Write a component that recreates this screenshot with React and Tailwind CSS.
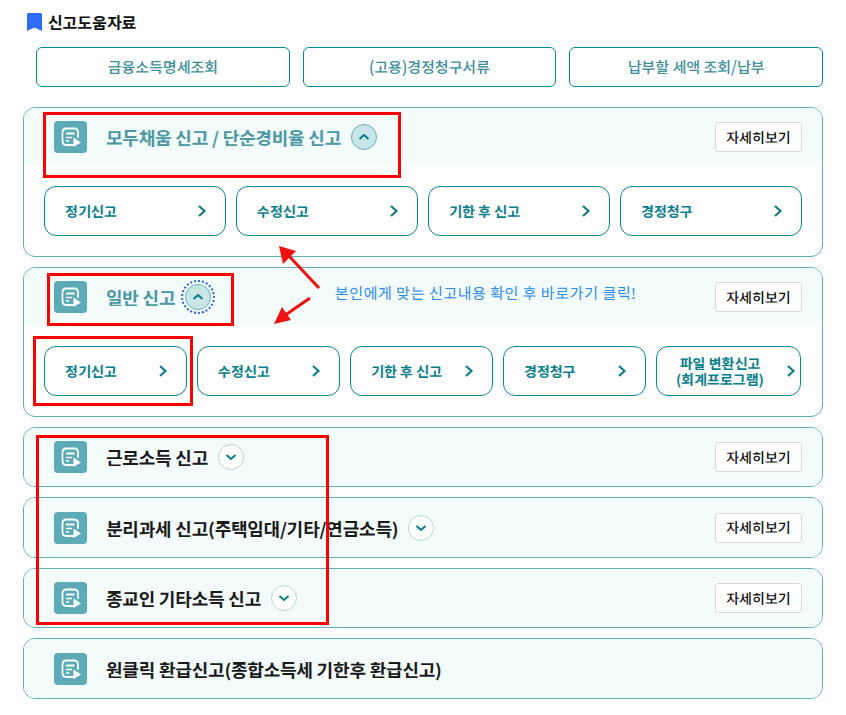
import React from "react";

const FONT = "font-['Noto_Sans_KR','Noto_Sans_CJK_KR',sans-serif]";

const FileIcon = () => (
  <div className="w-[33px] h-[32px] shrink-0 rounded-[4px] bg-[#5dabb6] flex items-center justify-center">
    <svg width="33" height="32" viewBox="0 0 33 32" fill="none">
      <path d="M20 24H12.5C10 24 8.5 22.5 8.5 20V11.5C8.5 9 10 7.5 12.5 7.5H20C22.5 7.5 24 9 24 11.5V16" stroke="white" strokeWidth="1.8" strokeLinecap="round" />
      <path d="M12 12.5H20.5" stroke="white" strokeWidth="1.8" />
      <path d="M12 16.5H18M12 20H15" stroke="white" strokeWidth="1.6" />
      <path d="M19.5 16.5L27 21.5L19.5 26Z" fill="white" />
    </svg>
  </div>
);

const Toggle = ({ open, focus }) => (
  <span className={`relative w-[26px] h-[26px] shrink-0 rounded-full border flex items-center justify-center ${open ? "bg-[#c9e5e6] border-[#6fb0b8]" : "bg-white border-[#b5d6da]"}`}>
    {focus && <span className="absolute -inset-[5px] rounded-full border-[2px] border-dotted border-[#2b63e0]" />}
    <svg width="12" height="8" viewBox="0 0 12 8" fill="none">
      <path d={open ? "M1.5 6L6 2L10.5 6" : "M1.5 2L6 6L10.5 2"} stroke="#00808c" strokeWidth="2" />
    </svg>
  </span>
);

const DetailButton = () => (
  <button className="w-[87px] h-[30px] shrink-0 rounded-[3px] border border-[#d8d8d8] bg-white text-[14px] font-medium text-[#111]">
    자세히보기
  </button>
);

const Header = ({ title, open, focus, detail, gap = "gap-[10px]", h = "h-[58px]" }) => (
  <div className={`flex items-center justify-between ${h} pl-[30px] pr-[20px] bg-[#f3fbfb]`}>
    <div className="flex items-center">
      <FileIcon />
      <span className={`ml-[19px] text-[18px] font-bold leading-none tracking-[-0.2px] ${open ? "text-[#4a98a3]" : "text-[#1a1a1a]"}`}>{title}</span>
      {open !== undefined && (
        <span className={`flex ${gap}`}>
          <span className="w-0" />
          <Toggle open={open} focus={focus} />
        </span>
      )}
    </div>
    {detail && <DetailButton />}
  </div>
);

const LinkButton = ({ label, second, wide }) => (
  <button className={`flex items-center justify-between h-[50px] rounded-[12px] border border-[#008a99] bg-white ${wide ? "w-[182px] pl-[20px] pr-[18px]" : "flex-1 pl-[20px] pr-[18px]"} ${second ? "!pl-[20px] !pr-[20px]" : ""} text-[14px] font-bold text-[#0b7f8d]`}>
    {second ? (
      <span className="text-center leading-[16px] -ml-[1px]">{label}<br />{second}</span>
    ) : (
      <span>{label}</span>
    )}
    <svg className={second ? "-mr-[16px] shrink-0" : "shrink-0"} width="10" height="14" viewBox="0 0 10 14" fill="none">
      <path d="M2 2L7.5 7L2 12" stroke="#0b7f8d" strokeWidth="2.2" />
    </svg>
  </button>
);

const Card = ({ children }) => (
  <div className="rounded-[12px] border border-[#62aeb8] overflow-hidden bg-white">{children}</div>
);

const Arrow = ({ d, points }) => (
  <g>
    <path d={d} stroke="#f01010" strokeWidth="3" />
    <polygon points={points} fill="#f01010" />
  </g>
);

export default function App() {
  return (
    <div className={`relative w-[846px] h-[715px] bg-white overflow-hidden ${FONT}`}>
      <div className="flex flex-col px-[23px] pt-[11px]">
        <div className="flex items-center h-[22px] pl-[4px] gap-[6px]">
          <svg width="15" height="18" viewBox="0 0 15 18"><path d="M1.5 0H13.5C14.3 0 15 .7 15 1.5V18L7.5 14.5L0 18V1.5C0 .7.7 0 1.5 0Z" fill="#2b6cf0" /></svg>
          <h2 className="text-[16px] font-bold text-[#111] leading-none">신고도움자료</h2>
        </div>

        <div className="flex gap-[13px] pl-[13px] mt-[14px]">
          {["금융소득명세조회", "(고용)경정청구서류", "납부할 세액 조회/납부"].map((t) => (
            <button key={t} className="flex-1 h-[40px] rounded-[6px] border border-[#008a99] bg-white text-[15px] font-medium text-[#3d8f9c]">{t}</button>
          ))}
        </div>

        <div className="flex flex-col gap-[10px] mt-[20px]">
          <Card>
            <Header title="모두채움 신고 / 단순경비율 신고" open detail />
            <div className="flex gap-[10px] pt-[20px] pl-[20px] pr-[20px] pb-[20px]">
              {["정기신고", "수정신고", "기한 후 신고", "경정청구"].map((t) => <LinkButton key={t} label={t} wide />)}
            </div>
          </Card>

          <Card>
            <Header title="일반 신고" open focus detail />
            <div className="flex gap-[10px] pt-[20px] pl-[20px] pr-[21px] pb-[20px]">
              {["정기신고", "수정신고", "기한 후 신고", "경정청구"].map((t) => <LinkButton key={t} label={t} />)}
              <LinkButton label="파일 변환신고" second="(회계프로그램)" />
            </div>
          </Card>

          <Card><Header title="근로소득 신고" open={false} detail /></Card>
          <Card><Header title="분리과세 신고(주택임대/기타/연금소득)" open={false} detail h="h-[59px]" /></Card>
          <Card><Header title="종교인 기타소득 신고" open={false} detail /></Card>
          <Card><Header title="원클릭 환급신고(종합소득세 기한후 환급신고)" h="h-[59px]" /></Card>
        </div>
      </div>

      {/* 빨간 표시 */}
      <div className="absolute left-[43px] top-[112px] w-[358px] h-[66px] border-[3px] border-[#ff0000]" />
      <div className="absolute left-[47px] top-[273px] w-[187px] h-[53px] border-[3px] border-[#ff0000]" />
      <div className="absolute left-[33px] top-[336px] w-[160px] h-[70px] border-[3px] border-[#ff0000]" />
      <div className="absolute left-[36px] top-[435px] w-[293px] h-[190px] border-[3px] border-[#ff0000]" />
      <svg className="absolute left-0 top-0 pointer-events-none" width="846" height="715" fill="none">
        <Arrow d="M319 288L288 255" points="279,246 296,251 283,264" />
        <Arrow d="M310 298L284 316" points="274,324 282,307 291,320" />
      </svg>
      <p className="absolute left-[335px] top-[282px] text-[15px] leading-[22px] tracking-[0.55px] text-[#2b8cf0]">
        본인에게 맞는 신고내용 확인 후 바로가기 클릭!
      </p>
    </div>
  );
}
